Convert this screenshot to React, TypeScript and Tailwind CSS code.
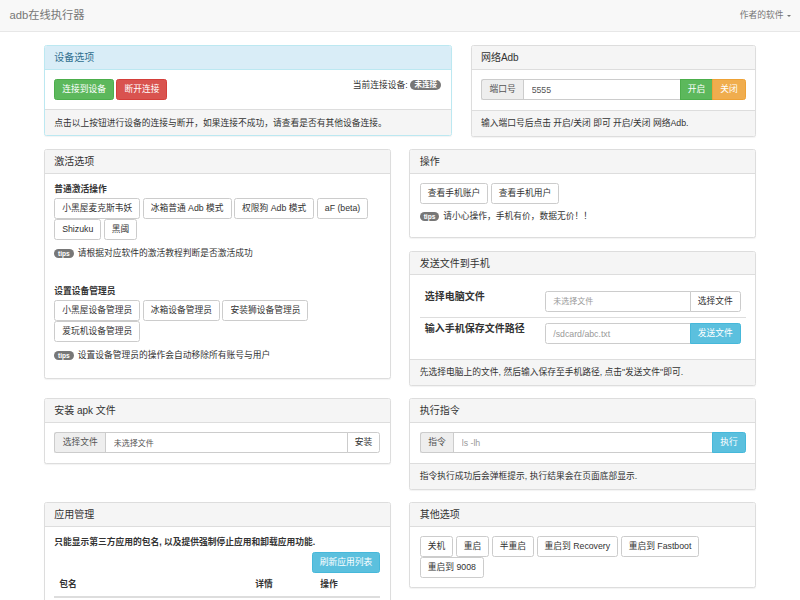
import type { ReactNode } from 'react';

type Tone = 'default' | 'success' | 'danger' | 'warning' | 'info';

const TONES: Record<Tone, string> = {
  default: 'border-[#ccc] bg-white text-[#333]',
  success: 'border-[#4cae4c] bg-[#5cb85c] text-white',
  danger: 'border-[#d43f3a] bg-[#d9534f] text-white',
  warning: 'border-[#eea236] bg-[#f0ad4e] text-white',
  info: 'border-[#46b8da] bg-[#5bc0de] text-white',
};

function Btn({
  children,
  tone = 'default',
  className = 'rounded-[2.5px]',
}: {
  children: ReactNode;
  tone?: Tone;
  className?: string;
}) {
  return (
    <button
      type="button"
      className={`h-[21px] shrink-0 whitespace-nowrap border px-[7px] leading-[12.5px] ${TONES[tone]} ${className}`}
    >
      {children}
    </button>
  );
}

function Tips({ children }: { children: ReactNode }) {
  return (
    <p className="flex items-center leading-[12.5px]">
      <span className="mr-[4px] inline-block rounded-full bg-[#777] px-[3.9px] text-[6.6px] font-bold leading-[9.5px] text-white">
        tips
      </span>
      {children}
    </p>
  );
}

function Panel({
  title,
  info = false,
  footer,
  children,
}: {
  title: string;
  info?: boolean;
  footer?: ReactNode;
  children: ReactNode;
}) {
  return (
    <div
      className={`mb-[12.5px] rounded-[2.5px] border bg-white shadow-[0_1px_1px_rgba(0,0,0,0.05)] ${
        info ? 'border-[#bce8f1]' : 'border-[#ddd]'
      }`}
    >
      <div
        className={`flex h-[23.5px] items-center rounded-t-[2px] border-b px-[9.4px] text-[10px] leading-[11px] ${
          info ? 'border-[#bce8f1] bg-[#d9edf7] text-[#31708f]' : 'border-[#ddd] bg-[#f5f5f5] text-[#333]'
        }`}
      >
        {title}
      </div>
      <div className="p-[9.4px]">{children}</div>
      {footer ? (
        <div className="rounded-b-[2px] border-t border-[#ddd] bg-[#f5f5f5] px-[9.4px] py-[6.25px] leading-[12.5px]">
          {footer}
        </div>
      ) : null}
    </div>
  );
}

function Addon({ children }: { children: ReactNode }) {
  return (
    <span className="flex h-[21.25px] shrink-0 items-center rounded-l-[2.5px] border border-r-0 border-[#ccc] bg-[#eee] px-[7.5px] text-[#555]">
      {children}
    </span>
  );
}

function Field({
  value,
  placeholder,
  className = '',
}: {
  value?: string;
  placeholder?: string;
  className?: string;
}) {
  return (
    <input
      readOnly
      defaultValue={value}
      placeholder={placeholder}
      className={`h-[21.25px] min-w-0 flex-1 border border-[#ccc] px-[7.5px] text-[#555] outline-none placeholder:text-[#999] ${className}`}
    />
  );
}

function Group({ children }: { children: ReactNode }) {
  return <div className="flex items-stretch">{children}</div>;
}

const ACTIVATE = ['小黑屋麦克斯韦妖', '冰箱普通 Adb 模式', '权限狗 Adb 模式', 'aF (beta)', 'Shizuku', '黑阈'];
const ADMINS = ['小黑屋设备管理员', '冰箱设备管理员', '安装狮设备管理员', '爱玩机设备管理员'];
const REBOOT = ['关机', '重启', '半重启', '重启到 Recovery', '重启到 Fastboot', '重启到 9008'];

export default function App() {
  return (
    <div className="h-[600px] overflow-hidden bg-white font-['Liberation_Sans','Noto_Sans_CJK_SC',sans-serif] text-[8.75px] leading-[12.5px] text-[#333]">
      <div className="flex h-[32px] items-center justify-between border-b border-[#e7e7e7] bg-[#f8f8f8] px-[9.4px]">
        <span className="text-[11.25px] text-[#777]">adb在线执行器</span>
        <span className="flex items-center text-[#777]">
          作者的软件
          <span className="ml-[3px] inline-block h-0 w-0 border-x-[2.5px] border-t-[2.5px] border-x-transparent border-t-[#777]" />
        </span>
      </div>

      <div className="mx-auto mt-[13px] w-[712.5px]">
        <div className="grid grid-cols-[408px_285.75px] items-start gap-x-[18.75px]">
          <Panel
            title="设备选项"
            info
            footer="点击以上按钮进行设备的连接与断开，如果连接不成功，请查看是否有其他设备连接。"
          >
            <div className="flex items-start justify-between">
              <div className="flex gap-x-[2.5px]">
                <Btn tone="success">连接到设备</Btn>
                <Btn tone="danger">断开连接</Btn>
              </div>
              <div className="flex items-center">
                当前连接设备:&nbsp;
                <span className="rounded-full bg-[#777] px-[4.4px] text-[7.5px] font-bold leading-[9.5px] text-white">
                  未连接
                </span>
              </div>
            </div>
          </Panel>

          <Panel title="网络Adb" footer="输入端口号后点击 开启/关闭 即可 开启/关闭 网络Adb.">
            <Group>
              <Addon>端口号</Addon>
              <Field value="5555" />
              <Btn tone="success" className="-ml-px">
                开启
              </Btn>
              <Btn tone="warning" className="-ml-px rounded-r-[2.5px]">
                关闭
              </Btn>
            </Group>
          </Panel>
        </div>

        <div className="grid grid-cols-2 items-start gap-x-[18.75px]">
          <Panel title="激活选项">
            <div className="font-bold">普通激活操作</div>
            <div className="mt-[2.5px] flex flex-wrap gap-x-[2.5px]">
              {ACTIVATE.map((name) => (
                <Btn key={name}>{name}</Btn>
              ))}
            </div>
            <div className="mt-[7.5px]">
              <Tips>请根据对应软件的激活教程判断是否激活成功</Tips>
            </div>
            <div className="mt-[25px] font-bold">设置设备管理员</div>
            <div className="mt-[2.5px] flex flex-wrap gap-x-[2.5px]">
              {ADMINS.map((name) => (
                <Btn key={name}>{name}</Btn>
              ))}
            </div>
            <div className="mt-[7.5px] mb-[6.25px]">
              <Tips>设置设备管理员的操作会自动移除所有账号与用户</Tips>
            </div>
          </Panel>

          <div>
            <Panel title="操作">
              <div className="flex gap-x-[2.5px]">
                <Btn>查看手机账户</Btn>
                <Btn>查看手机用户</Btn>
              </div>
              <div className="mt-[6.5px] mb-[5px]">
                <Tips>请小心操作，手机有价，数据无价！！</Tips>
              </div>
            </Panel>

            <Panel
              title="发送文件到手机"
              footer={'先选择电脑上的文件, 然后输入保存至手机路径, 点击"发送文件"即可.'}
            >
              <table className="w-full border-collapse">
                <tbody>
                  <tr>
                    <td className="w-[120px] border-t border-transparent p-[5px] align-top text-[10px] font-bold leading-[12.5px]">
                      选择电脑文件
                    </td>
                    <td className="border-t border-transparent p-[5px]">
                      <Group>
                        <Field placeholder="未选择文件" className="rounded-l-[2.5px] text-[8px] placeholder:text-[#777]" />
                        <Btn className="-ml-px rounded-r-[2.5px]">选择文件</Btn>
                      </Group>
                    </td>
                  </tr>
                  <tr>
                    <td className="border-t border-[#ddd] p-[5px] align-top text-[10px] font-bold leading-[12.5px]">
                      输入手机保存文件路径
                    </td>
                    <td className="border-t border-[#ddd] p-[5px]">
                      <Group>
                        <Field placeholder="/sdcard/abc.txt" className="rounded-l-[2.5px]" />
                        <Btn tone="info" className="-ml-px rounded-r-[2.5px]">
                          发送文件
                        </Btn>
                      </Group>
                    </td>
                  </tr>
                </tbody>
              </table>
            </Panel>
          </div>
        </div>

        <div className="grid grid-cols-2 items-start gap-x-[18.75px]">
          <Panel title="安装 apk 文件">
            <Group>
              <Addon>选择文件</Addon>
              <Field value="未选择文件" className="text-[8px]" />
              <Btn className="-ml-px rounded-r-[2.5px]">安装</Btn>
            </Group>
          </Panel>

          <Panel title="执行指令" footer="指令执行成功后会弹框提示, 执行结果会在页面底部显示.">
            <Group>
              <Addon>指令</Addon>
              <Field placeholder="ls -lh" />
              <Btn tone="info" className="-ml-px rounded-r-[2.5px]">
                执行
              </Btn>
            </Group>
          </Panel>
        </div>

        <div className="grid grid-cols-2 items-start gap-x-[18.75px]">
          <Panel title="应用管理">
            <div className="font-bold">只能显示第三方应用的包名, 以及提供强制停止应用和卸载应用功能.</div>
            <div className="mt-[3.5px] flex justify-end">
              <Btn tone="info">刷新应用列表</Btn>
            </div>
            <table className="w-full border-collapse">
              <thead>
                <tr>
                  <th className="w-[196px] border-b-2 border-[#ddd] p-[5px] text-left font-bold">包名</th>
                  <th className="w-[65px] border-b-2 border-[#ddd] p-[5px] text-left font-bold">详情</th>
                  <th className="border-b-2 border-[#ddd] p-[5px] text-left font-bold">操作</th>
                </tr>
              </thead>
              <tbody>
                <tr>
                  <td colSpan={3} className="h-[20px]" />
                </tr>
              </tbody>
            </table>
          </Panel>

          <Panel title="其他选项">
            <div className="flex flex-wrap gap-x-[2.5px]">
              {REBOOT.map((name) => (
                <Btn key={name}>{name}</Btn>
              ))}
            </div>
          </Panel>
        </div>
      </div>
    </div>
  );
}
